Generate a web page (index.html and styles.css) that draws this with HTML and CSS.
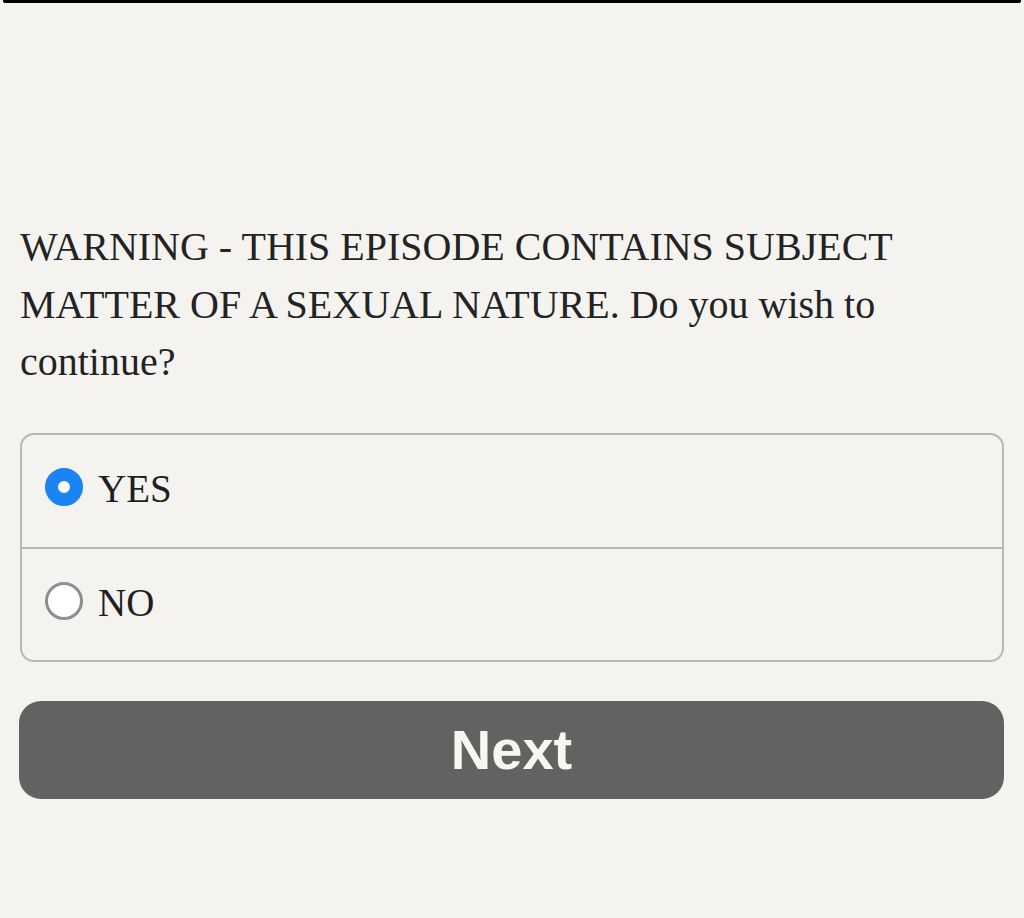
FILE: index.html
```html
<!DOCTYPE html>
<html lang="en">
<head>
<meta charset="utf-8">
<title>Warning</title>
<link rel="stylesheet" href="styles.css">
</head>
<body>
<div class="topbar"></div>
<main class="page">
  <p class="question">WARNING - THIS EPISODE CONTAINS SUBJECT MATTER OF A SEXUAL NATURE. Do you wish to continue?</p>
  <div class="options">
    <label class="option">
      <span class="radio radio-on"></span>
      <span class="label">YES</span>
    </label>
    <label class="option">
      <span class="radio"></span>
      <span class="label">NO</span>
    </label>
  </div>
  <button class="next" type="button">Next</button>
</main>
</body>
</html>
```
FILE: styles.css
```css
html, body {
  margin: 0;
  padding: 0;
  background: #f4f3f0;
}
body {
  height: 918px;
  overflow: hidden;
}
.topbar {
  height: 3px;
  margin: 0 3px;
  background: #000;
  border-radius: 0 0 2px 2px;
}
.page {
  padding: 215px 20px 0 20px;
  display: flex;
  flex-direction: column;
}
.question {
  margin: 0;
  font-family: "Liberation Serif", "Times New Roman", serif;
  font-size: 40px;
  line-height: 57.5px;
  color: #232323;
}
.options {
  margin-top: 42px;
  border: 2px solid #b8b7b5;
  border-radius: 14px;
  display: flex;
  flex-direction: column;
}
.option {
  height: 112px;
  box-sizing: border-box;
  padding-bottom: 7px;
  display: flex;
  align-items: center;
  gap: 15px;
  padding-left: 23px;
}
.option + .option {
  border-top: 2px solid #b8b7b5;
  height: 113px;
  padding-bottom: 6px;
}
.radio {
  width: 38px;
  height: 38px;
  box-sizing: border-box;
  border-radius: 50%;
  border: 3px solid #8e8e8e;
  background: #fff;
  flex: none;
}
.radio-on {
  border: 13.5px solid #1a84f4;
  background: #fff;
}
.label {
  font-family: "Liberation Serif", "Times New Roman", serif;
  font-size: 39px;
  color: #1f1f1f;
  line-height: 1;
  padding-top: 3px;
}
.next {
  margin-top: 39px;
  margin-left: -1px;
  height: 98px;
  border: none;
  border-radius: 22px;
  background: #636260;
  color: #f7f6f3;
  font-family: "Liberation Sans", Arial, sans-serif;
  font-weight: bold;
  font-size: 56px;
  padding: 0;
}
```
